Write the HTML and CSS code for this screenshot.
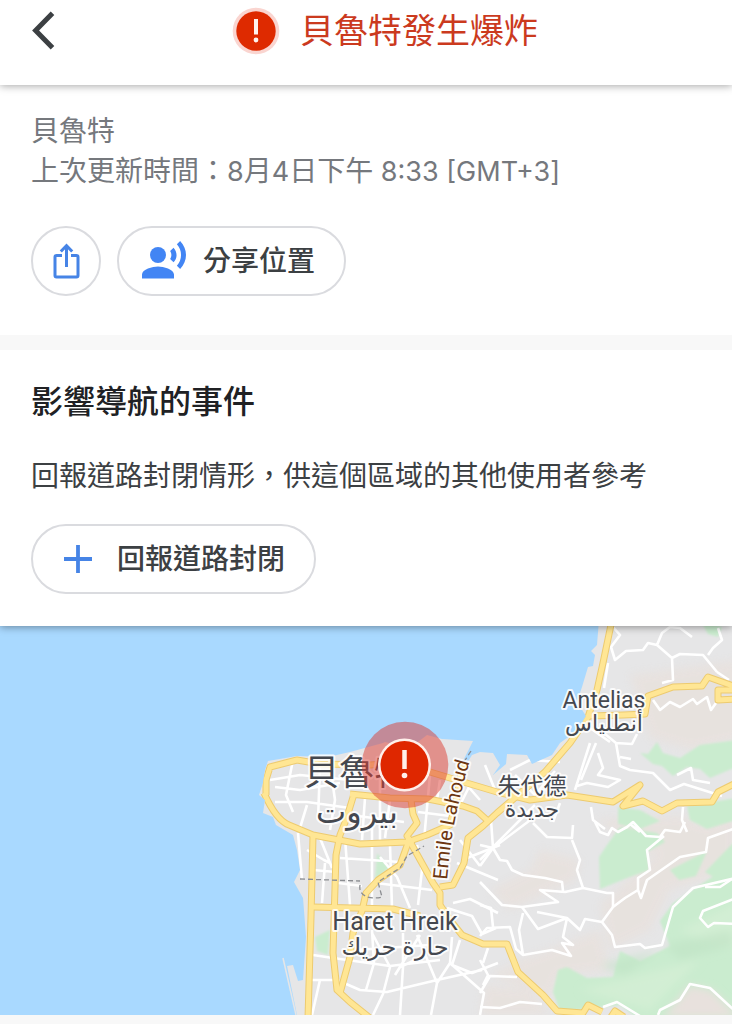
FILE: index.html
```html
<!DOCTYPE html>
<html lang="zh-Hant">
<head>
<meta charset="utf-8">
<meta name="viewport" content="width=device-width, initial-scale=1">
<title>貝魯特發生爆炸</title>
<link rel="stylesheet" href="styles.css">
</head>
<body>
<header class="topbar">
  <button class="back" type="button" aria-label="返回">
    <svg width="24" height="40" viewBox="0 0 24 40" aria-hidden="true"><path d="M20.5 2.2 3.6 19.5l16.9 17.3" fill="none" stroke="#3c4043" stroke-width="5"/></svg>
  </button>
  <div class="topbar-title">
    <svg width="48" height="48" viewBox="0 0 48 48" aria-hidden="true">
      <circle cx="24" cy="24" r="23.3" fill="#fad5d0"/>
      <circle cx="24" cy="24" r="19.7" fill="#de2a00"/>
      <path d="M24 12v15.5" stroke="#fff3ee" stroke-width="4"/>
      <circle cx="24" cy="33" r="2.4" fill="#fff3ee"/>
    </svg>
    <h1>貝魯特發生爆炸</h1>
  </div>
</header>

<main>
  <section class="info">
    <p class="meta">貝魯特</p>
    <p class="meta">上次更新時間：<span class="latin">8</span>月<span class="latin">4</span>日下午<span class="latin"> 8:33 [GMT+3]</span></p>
    <div class="actions">
      <button class="round" type="button" aria-label="分享">
        <svg width="36" height="36" viewBox="0 0 36 36" fill="none" stroke="#4684e6" stroke-width="3" aria-hidden="true">
          <path d="M14 12.5H8.500a1.500 1.500 0 0 0-1.500 1.500v18.500a1.500 1.500 0 0 0 1.500 1.500h20a1.500 1.500 0 0 0 1.500-1.500V14a1.500 1.500 0 0 0-1.500-1.500H23"/>
          <path d="M18.500 3v21M12.800 8.500l5.700-5.800 5.700 5.800"/>
        </svg>
      </button>
      <button class="pill pill-share" type="button">
        <svg width="44" height="44" viewBox="1 1 22 22" fill="#4285f4" aria-hidden="true">
          <circle cx="9" cy="9" r="4"/>
          <path d="M9 14.700c-2.670 0-8 1.340-8 4v2h16v-2c0-2.660-5.330-4-8-4z"/>
          <path d="M16.760 5.360l-1.680 1.690c.84 1.180.84 2.710 0 3.890l1.680 1.690c2.020-2.020 2.020-5.070 0-7.270zM20.070 2l-1.630 1.630c2.770 3.020 2.770 7.560 0 10.740L20.070 16c3.900-3.890 3.910-9.950 0-14z"/>
        </svg>
        <span>分享位置</span>
      </button>
    </div>
  </section>

  <section class="events">
    <h2>影響導航的事件</h2>
    <p>回報道路封閉情形，供這個區域的其他使用者參考</p>
    <button class="pill pill-report" type="button">
      <svg width="28" height="28" viewBox="0 0 28 28" aria-hidden="true"><path d="M14 0v28M0 14h28" stroke="#4684e6" stroke-width="3.800"/></svg>
      <span>回報道路封閉</span>
    </button>
  </section>

  <svg class="map" viewBox="0 626 732 389" role="img" aria-label="貝魯特地圖">
    <defs>
      <clipPath id="land-clip"><use href="#land"/></clipPath>
      <filter id="soft" x="-20%" y="-20%" width="140%" height="140%"><feGaussianBlur stdDeviation="4"/></filter>
      <filter id="edge"><feGaussianBlur stdDeviation="1"/></filter>
      <path id="land" d="M599 620L597 645 591 651 595 655 593 666 588 667 582 687 577 702 586 716 578 730 560 743 552 755 532 764 527 755 507 754 506 764 493 775 500 765 493 753 480 752 472 755 467 763 463 761 473 741 442 739 427 735 410 748 385 742 383 743 350 752 328 757 297 756 268 761 265 770 263 783 259 795 265 800 263 813 273 817 276 825 293 835 297 850 300 870 294 882 303 898 306 937 303 980 298 981 293 965 287 966 298 1020H740V620z"/>
      <g id="roads">
        <path d="M612 620L603 663 597 690 588 717 570 743 545 772 497 813 483 826 468 838 464 863 453 885 440 887"/>
        <path d="M266 795V780L270 767 297 760 320 764 370 765 400 763 430 772 450 778 497 792 530 800 567 795 613 802 640 785 623 806 643 801 662 811 677 803 712 802 718 792 736 783"/>
        <path d="M264 793Q276 820 289 825L313 835 360 844 407 842 427 835 450 825 456 802 463 762"/>
        <path d="M350 794L390 798 428 799 463 806 477 811 488 821M354 794L346 820 340 835 336 855 333 953 337 990 350 1002 370 1018M411 800L413 814 417 823 407 836 412 844"/>
        <path d="M313 836L311 917 308 1018M340 993L350 957 353 933 362 911 366 893 378 880 400 865 408 843"/>
        <path d="M313 907L393 909 420 916M408 838L433 883 440 893V905L450 920 462 935 483 944 507 944 518 972 543 995 557 1011 583 1013 588 1005 602 1012M611 1017 615 1011 624 1017"/>
        <path d="M590 716L623 715 645 714 648 696 673 687 702 686 708 677 736 687M736 690L718 690V700L736 699"/>
      </g>
    </defs>
    <rect y="620" width="740" height="400" fill="#a9d9ff"/>
    <use href="#land" fill="#e6e6e7"/>
    <path d="M283 958L296 1015" stroke="#e6e6e7" stroke-width="1.500"/>
    <g clip-path="url(#land-clip)">
      <g fill="#e8e1dd" filter="url(#soft)" opacity=".8">
        <path d="M630 675L740 660 740 740 690 750 650 738z"/>
        <path d="M540 850L580 860 576 880 510 910 490 890 530 870z"/>
        <path d="M600 905L660 850 735 810V870L670 890 650 930 610 950z"/>
        <path d="M520 960L600 930 610 970 560 975 550 1000 490 975z"/>
        <path d="M595 820L680 815 720 830 650 855z"/>
        <path d="M485 985L530 990 550 1015H480zM660 1015L695 985 740 1015z"/>
      </g>
      <g fill="#caeccf" filter="url(#edge)">
        <path d="M700 620L722 627 718 637 708 634zM640 753L648 754 657 742 663 753 680 758 700 745 736 740V767L710 778 700 769 687 767 673 776 662 766 653 764zM618 807L640 810 660 821 640 829 618 824zM687 806L736 798V820L707 829 690 820zM607 845L620 827 657 833 665 842 647 852 649 870 627 878 600 889 599 857zM670 870L707 851 696 876 679 880zM705 872L736 840V880L715 878z"/>
        <path d="M660 921L673 903 700 885 738 860V1020H640L620 1005 560 1012 553 992 558 970 567 967 587 978 613 977 620 951 640 961 670 946z"/>
        <path d="M377 853L389 868 375 880zM315 937L330 930 328 955 317 951z"/>
      </g>
      <g filter="url(#soft)">
        <path d="M680 930L740 900V950L700 940zM580 990L640 975 700 960 650 1010z" fill="#d6f0d6" opacity=".7"/>
        <path d="M665 945L730 930 736 945 680 960zM600 965L660 950 625 975z" fill="#bfe2c4" opacity=".6"/>
        <path d="M662 1018L690 985 712 990 740 1018z" fill="#e8e1dd"/>
      </g>
      <g fill="none" stroke="#fff" stroke-width="2.600" stroke-linejoin="round">
        <path d="M613 627L620 635 611 647 615 660 626 651 643 650 648 643 657 645 662 633 670 627 680 628 692 637M657 645L672 658 673 680 662 683M672 658L680 654 703 655 717 672M708 655L713 648 722 640 718 628M608 663L604 688M717 672l12 8"/>
        <path d="M653 700L660 710 670 702 680 707 693 699 697 704 707 697 711 710 716 703"/>
        <path d="M590 743L575 790M596 743L581 780M598 753L603 768 598 775 620 780 608 787 587 783 577 786M616 743L620 766 630 770 653 773 670 790 684 784 722 796M677 775L691 768 693 780 710 783M600 730L616 743 632 744 637 734M590 728l20 14M620 757l11 2"/>
        <path d="M683 807L682 820 687 832M591 807L593 820 605 829M560 803L553 822M535 805L520 820 480 860"/>
        <path d="M595 822L600 832 608 835 612 828 618 832 627 827 633 822 646 836 660 837 665 830 680 832 685 822M736 828L708 838 706 852 680 857 647 880 641 898 638 890 625 898 613 907 602 922 612 935 615 947 640 944 645 948 662 945 673 907 693 888 736 878M664 836L647 850 650 870 638 878V890M640 832l-10-8"/>
        <path d="M736 898L703 911 700 918 708 927 714 923 736 924M705 887h15l12-8M572 840L580 860 577 870 583 888 607 893 613 893V907M583 888L565 892 540 890 558 902 522 907 502 905 480 882M493 848L500 860 507 861 512 870 523 875 545 878 562 882 563 891"/>
        <path d="M533 823L547 837 572 838 573 825M522 907L538 929 567 918 537 912M567 918L580 930 585 919 602 922M567 918L563 937 573 945 562 943 571 956 552 950 523 955 519 930 523 913M523 955L516 949 510 927 487 928 480 936M493 927L491 908 480 905"/>
        <path d="M480 1007L500 1008 520 1002 542 1004M517 977L490 976 480 993M488 948L483 963M603 1007L617 1002 640 1016M658 1015L660 1010 680 1000 690 984 710 988 736 1012M480 845L493 848 533 818M480 866L493 848 491 820"/>
        <path d="M298 833L302 880M307 850L324 860 330 863M320 838L332 868M325 863L322 903M372 820V905M380 857L397 877 410 908M376 883L432 890M338 883L362 886M417 845L422 870 418 905M457 863L498 880M467 858L500 845M453 903L470 899 482 905 498 913M447 908l25 8 10 18 14-6M340 858L400 862M313 870L336 872M345 838L350 905M390 845L392 908"/>
        <path d="M310 980L337 980 360 990 387 992 437 980 482 970M313 955L333 958 390 966 440 960M372 933L390 967 383 994 373 1015M403 933L403 967 400 1015M366 990L374 963 372 930M417 935L437 983 450 963 452 937M450 963L484 993 480 1015M320 980L312 1015M420 935L395 975M355 950L430 945M480 960L488 975 483 985M437 983l-6 32M460 940l-8 25 20 8 26-10M400 967l22-10"/>
        <path d="M270 780L300 775 350 780M275 787L300 790 340 783M293 760L286 795 293 812M275 802L307 802 350 808M320 765L318 820M330 765L335 800 330 830M365 798L362 840M380 768V842M390 800L385 838M307 805L300 828M350 815L404 822M418 812L450 816M430 775L424 840M470 785L455 815M465 783L480 800M440 780L437 800M485 765L495 790M460 840L480 866M510 770L530 760 560 762M515 775l20 20 20-24"/>
      </g>
      <g fill="none" stroke-linejoin="round">
        <use href="#roads" stroke="#edcb70" stroke-width="7"/>
        <use href="#roads" stroke="#ffe694" stroke-width="5"/>
      </g>
    </g>
    <path d="M471 751L462 765M300 879L360 881M360 885C358 896 370 900 382 897L378 882 400 868 407 856 424 846" fill="none" stroke="#8b8d91" stroke-width="1.300" stroke-dasharray="5 3"/>
    <g class="map-labels">
      <text class="city" x="304" y="785">貝魯特</text>
      <text class="city-ar" x="357" y="823">بيروت</text>
      <text class="town" x="604" y="708">Antelias</text>
      <text class="town-ar" x="604" y="731">أنطلياس</text>
      <text class="town" x="532" y="794">朱代德</text>
      <text class="town-ar" x="532" y="817">جديدة</text>
      <text class="district" x="395" y="930">Haret Hreik</text>
      <text class="district-ar" x="395" y="955">حارة حريك</text>
      <path id="lahoud" d="M447 880C450 850 452 822 470 760" fill="none" stroke="none"/>
      <text class="street"><textPath href="#lahoud">Emile Lahoud</textPath></text>
    </g>
    <circle cx="405" cy="765" r="43.300" fill="#dc3c32" fill-opacity=".5"/>
    <circle cx="404.500" cy="765" r="26.500" fill="#fff0eb"/>
    <circle cx="404.500" cy="765" r="24" fill="#df2700"/>
    <path d="M404.500 750v19" stroke="#fff0eb" stroke-width="4.500"/>
    <circle cx="404.500" cy="775.500" r="2.800" fill="#fff0eb"/>
  </svg>
</main>
</body>
</html>
```
FILE: styles.css
```css
* {
  box-sizing: border-box;
}

body {
  margin: 0;
  background: #f8f8f8;
  color: #3c4043;
  font-family: Inter, "Noto Sans CJK TC", sans-serif;
  font-size: 28px;
  line-height: 40px;
}

h1,
h2,
p {
  margin: 0;
  font-weight: 400;
}

svg {
  display: block;
  flex: none;
}

button {
  display: flex;
  align-items: center;
  padding: 0;
  border: 0;
  background: #fff;
  color: inherit;
  font: inherit;
  cursor: pointer;
}

.topbar {
  position: relative;
  z-index: 1;
  display: flex;
  align-items: center;
  padding: 7px 30px 30px 32px;
  background: #fff;
  box-shadow: 0 1px 8px rgba(0, 0, 0, 0.35);
}

.back {
  width: 36px;
}

.topbar-title {
  display: flex;
  flex: 1;
  align-items: center;
  justify-content: center;
  gap: 20px;
}

h1 {
  color: #cb3a1e;
  font-size: 34px;
}

.info {
  padding: 26px 31px 39px;
  background: #fff;
}

.meta {
  color: #75787d;
}

.latin {
  font-size: 27px;
  line-height: 1;
}

.actions {
  display: flex;
  gap: 16px;
  margin-top: 35px;
}

.round,
.pill {
  height: 70px;
  border: 2px solid #dadbdf;
  border-radius: 35px;
}

.round {
  justify-content: center;
  width: 70px;
}

.pill {
  font-weight: 500;
}

.pill-share {
  gap: 17px;
  padding: 0 29px 0 23px;
}

.pill-report {
  gap: 25px;
  margin-top: 28px;
  padding: 0 29px 0 31px;
}

.events {
  position: relative;
  margin-top: 15px;
  padding: 32px 31px;
  background: #fff;
  box-shadow: 0 1px 8px rgba(0, 0, 0, 0.4);
  clip-path: inset(0 0 -16px 0);
}

h2 {
  margin-bottom: 34px;
  color: #202124;
  font-size: 32px;
  font-weight: 500;
}

.map {
  width: 100%;
  height: auto;
}

.map-labels {
  fill: #45484f;
  stroke: #fff;
  stroke-width: 4px;
  stroke-linejoin: round;
  stroke-opacity: 0.85;
  paint-order: stroke;
  font-family: Roboto, "Noto Sans CJK TC", "DejaVu Sans", sans-serif;
  text-anchor: middle;
}

.city {
  font-size: 35px;
  text-anchor: start;
}

.city-ar {
  font-size: 32px;
}

.town {
  font-size: 23px;
}

.town-ar {
  font-size: 22px;
}

.district {
  font-size: 25px;
}

.district-ar {
  font-size: 24px;
}

.street {
  fill: #6d3610;
  font-size: 20px;
  text-anchor: start;
}
```
